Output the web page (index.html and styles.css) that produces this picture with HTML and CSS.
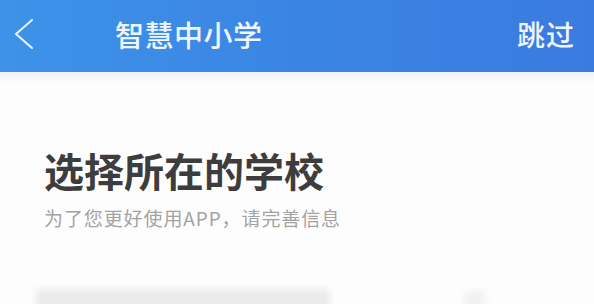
FILE: index.html
```html
<!DOCTYPE html>
<html lang="zh-CN">
<head>
<meta charset="utf-8">
<title>智慧中小学</title>
<link rel="stylesheet" href="styles.css">
</head>
<body>
<header class="topbar">
  <div class="back">
    <svg width="24" height="32" viewBox="0 0 24 32"><path d="M20 2 L4 16 L20 30" fill="none" stroke="#eaf3fd" stroke-width="2" stroke-linecap="round" stroke-linejoin="round"/></svg>
  </div>
  <div class="title">智慧中小学</div>
  <div class="spacer"></div>
  <div class="skip">跳过</div>
</header>
<div class="shade"></div>
<main class="content">
  <h1 class="heading">选择所在的学校</h1>
  <p class="sub">为了您更好使用APP，请完善信息</p>
  <div class="searchrow">
    <div class="blur-text"></div>
    <div class="blur-icon"></div>
  </div>
</main>
</body>
</html>
```
FILE: styles.css
```css
html, body {
  margin: 0;
  padding: 0;
  background: #fdfdfd;
  overflow: hidden;
  font-family: "Noto Sans CJK SC", "Noto Sans", sans-serif;
}
.topbar {
  height: 72px;
  background: linear-gradient(90deg, #3e92e8 0%, #3a85e4 50%, #3a7be0 100%);
  display: flex;
  align-items: center;
  padding: 0 19px 4px 12px;
  box-sizing: border-box;
  color: #eef5fd;
}
.back {
  width: 24px;
  height: 32px;
  display: flex;
}
.title {
  margin-left: 79px;
  font-size: 29px;
  font-weight: 500;
  line-height: 1;
  letter-spacing: 0.5px;
}
.spacer { flex: 1; }
.skip {
  font-size: 28px;
  font-weight: 500;
  line-height: 1;
  letter-spacing: 1px;
}
.shade {
  height: 12px;
  background: linear-gradient(180deg, #eef1f6 0%, #fdfdfd 100%);
}
.content {
  padding: 0 44px;
}
.heading {
  margin: 66px 0 0 0;
  font-size: 40px;
  font-weight: 700;
  line-height: 1;
  color: #3d3d3d;
}
.sub {
  margin: 18px 0 0 0;
  font-size: 19px;
  line-height: 1;
  color: #a3a3a3;
  letter-spacing: 0.9px;
}
.searchrow {
  margin-top: 62px;
  display: flex;
  align-items: flex-start;
}
.blur-text {
  margin-left: -8px;
  width: 294px;
  height: 22px;
  background: #ebebeb;
  border-radius: 4px;
  filter: blur(3px);
}
.blur-icon {
  margin-left: 135px;
  margin-top: 2px;
  width: 20px;
  height: 20px;
  background: #f1f1f1;
  filter: blur(3px);
}
```
